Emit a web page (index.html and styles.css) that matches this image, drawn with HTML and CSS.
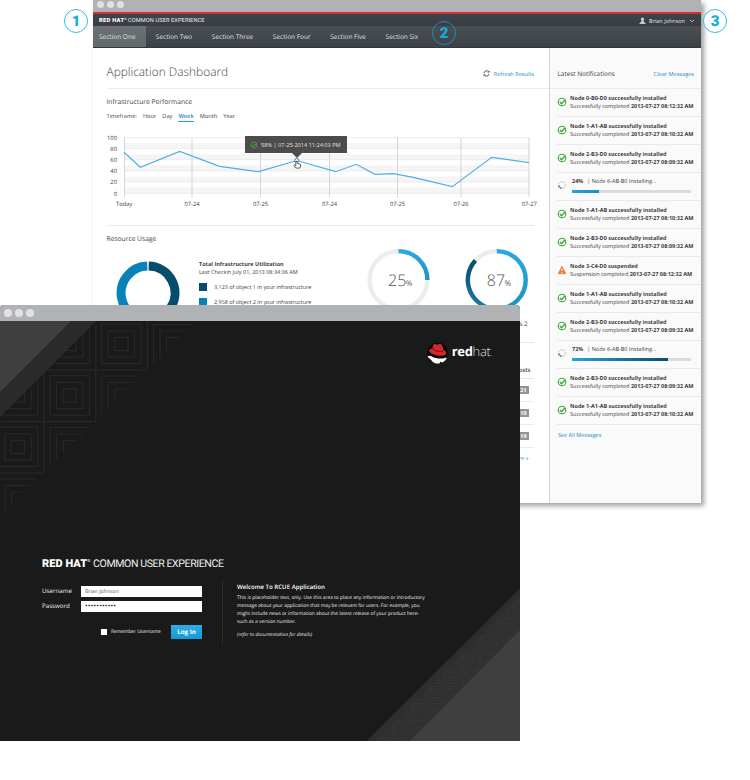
FILE: index.html
```html
<!DOCTYPE html>
<html lang="en">
<head>
<meta charset="utf-8">
<title>Red Hat Common User Experience</title>
<link rel="stylesheet" href="styles.css">
</head>
<body>
<svg class="defs" width="0" height="0" aria-hidden="true">
  <defs>
    <symbol id="ok" viewBox="0 0 10 10"><circle cx="5" cy="5" r="3.8" fill="none" stroke="#3fa535" stroke-width="1.1"/><path d="M2.9 5l1.6 1.7L8.2 2.8" fill="none" stroke="#3fa535" stroke-width="1.3"/></symbol>
    <symbol id="warn" viewBox="0 0 10 10"><path d="M5 1.2L8.9 8.7H1.1z" fill="#ec7a2c" stroke="#ec7a2c" stroke-width=".6" stroke-linejoin="round"/><path d="M5 3.6v2.6M5 7v1" stroke="#fff" stroke-width="1"/></symbol>
    <symbol id="spin" viewBox="0 0 10 10"><circle cx="5" cy="5" r="3.4" fill="none" stroke="#c9c9c9" stroke-width="1.1" stroke-dasharray="1.5 .7"/><path d="M1.7 5.6A3.4 3.4 0 0 0 5 8.4" fill="none" stroke="#555" stroke-width="1.3" stroke-dasharray="1.6 .6"/></symbol>
    <g id="corner" fill="none" stroke="#272727" stroke-width="1.2"><path d="M6 44.500V6H44.500M12.500 38.500V12.500H38.500M19 32V19H32"/></g>
    <g id="tile" fill="none" stroke="#272727" stroke-width="1.2"><path d="M5.700 5.700h39.500v39.500h-39.500zM12.300 12.300h26.400v26.400h-26.400zM18.800 18.800h13.300v13.300h-13.300zM0 51.600H51.600V0"/></g>
  </defs>
</svg>
<div class="desktop">
  <section class="window dashboard">
    <div class="titlebar"><i></i><i></i><i></i></div>
    <header class="topbar">
      <div class="product"><b>RED HAT</b><sup>®</sup> <span>COMMON USER EXPERIENCE</span></div>
      <div class="user">
        <svg width="7" height="8" viewBox="0 0 7 8"><path d="M3.500.4c1.200 0 1.700.8 1.600 1.900-.1.900-.5 1.400-.6 1.900.2.800 2 .8 2.200 2.800H.3c.2-2 2-2 2.200-2.800-.1-.5-.5-1-.6-1.900C1.800 1.200 2.300.4 3.500.4z" fill="#c6c8ca"/></svg>
        <span>Brian Johnson</span>
        <svg width="6" height="4" viewBox="0 0 6 4"><path d="M1 .9l2 2 2-2" fill="none" stroke="#c6c8ca" stroke-width=".9"/></svg>
      </div>
    </header>
    <nav class="nav">
      <a class="active">Section One</a><a>Section Two</a><a>Section Three</a><a>Section Four</a><a>Section Five</a><a>Section Six</a>
    </nav>
    <div class="body">
      <main class="main">
        <div class="pagehead">
          <h1>Application Dashboard</h1>
          <div class="refresh">
            <svg width="7" height="7" viewBox="0 0 7 7"><path d="M1 3a2.600 2.600 0 0 1 4.600-1.200M6 4a2.600 2.600 0 0 1-4.600 1.200" fill="none" stroke="#444" stroke-width=".9"/><path d="M6.500.4v2.200H4.300zM.5 6.600V4.400h2.200z" fill="#444"/></svg>
            <a>Refresh Results</a>
          </div>
        </div>
        <section class="performance">
          <h2>Infrastructure Performance</h2>
          <div class="timeframe"><span>Timeframe:</span><a>Hour</a><a>Day</a><a class="current">Week</a><a>Month</a><a>Year</a></div>
          <svg class="chart" width="436" height="80" viewBox="107 130 436 80">
            <g fill="#f5f5f5"><path d="M124 143h405v5.600H124zM124 154.200h405v5.600H124zM124 165.300h405v5.600H124zM124 176.500h405v5.500H124zM124 187.600h405v5.600H124z"/></g>
            <path d="M124 137.500H529M124 148.600H529M124 159.700H529M124 170.900H529M124 182H529M124 193.300H529" stroke="#e8e8ea" stroke-width=".8"/>
            <path d="M124.500 137.500V197M192 137.500V197M260.500 137.500V197M329.500 137.500V197M397.500 137.500V197M461 137.500V197M529 137.500V197" stroke="#d4d5d8"/>
            <polyline points="124,152.300 140.300,167.300 179.700,151.500 219.700,166.300 258.700,171.700 296.700,160.500 335.700,171.700 356.300,164.300 375,174.300 393.300,173.700 413.300,177.300 452.300,186.700 491.700,157.300 529,162.700" fill="none" stroke="#4fb0e4" stroke-width="1.200"/>
            <g class="ylabels"><text x="117" y="140">100</text><text x="117" y="151">80</text><text x="117" y="162">60</text><text x="117" y="173.300">40</text><text x="117" y="184.400">20</text><text x="117" y="195.500">0</text></g>
            <g class="xlabels"><text x="124.300" y="206">Today</text><text x="192" y="206">07-24</text><text x="260.500" y="206">07-25</text><text x="329.500" y="206">07-24</text><text x="397.500" y="206">07-25</text><text x="461" y="206">07-26</text><text x="529.300" y="206">07-27</text></g>
            <circle cx="296.700" cy="160.500" r="2" fill="#fff" stroke="#1d7fb5"/>
            <path d="M295.700 168l-1.900-2.600.9-.7 1.200 1v-4.200l1.100-.4.500 2.200 2.900.9.200 2-.8 1.900z" fill="#fff" stroke="#333" stroke-width=".8"/>
          </svg>
          <div class="tooltip"><svg width="8" height="8"><use href="#ok"/></svg><span>58% | 07-25-2014 11:24:03 PM</span></div>
        </section>
        <section class="usage">
          <h2>Resource Usage</h2>
          <div class="usagerow">
            <svg class="donut" width="64" height="64" viewBox="-32 -32 64 64"><g fill="none" stroke-width="9"><path d="M.7-27A27 27 0 0 1 22.800 14.500" stroke="#064c6b"/><path d="M21.800 15.900A27 27 0 0 1 9.500 25.300" stroke="#3ab0e2"/><path d="M8 25.800A27 27 0 1 1-.7-27" stroke="#0a82b8"/></g></svg>
            <div class="legend">
              <h3>Total Infrastructure Utilization</h3>
              <p>Last Checkin July 01, 2013 08:34:36 AM</p>
              <div class="key"><i class="k1"></i>3,123 of object 1 in your infrastructure</div>
              <div class="key"><i class="k2"></i>2,958 of object 2 in your infrastructure</div>
            </div>
            <svg class="gauges" width="162" height="64" viewBox="366 248 162 64">
              <defs>
                <linearGradient id="g1" x1="0" y1="0" x2="0" y2="1"><stop offset="0" stop-color="#27aae1"/><stop offset="1" stop-color="#2291c4"/></linearGradient>
                <linearGradient id="g2" x1="0" y1="0" x2="0" y2="1"><stop offset="0" stop-color="#0a4c6a"/><stop offset="1" stop-color="#1c7baa"/></linearGradient>
              </defs>
              <g fill="none" stroke-width="4.400"><circle cx="398.500" cy="280" r="28.900" stroke="#ececed"/><path d="M398.500 251.100a28.900 28.900 0 0 1 28.900 28.900" stroke="url(#g1)"/>
              <circle cx="496.800" cy="280" r="28.900" stroke="#ececed"/><path d="M496.800 251.100a28.900 28.900 0 0 1 0 57.800" stroke="url(#g1)"/><path d="M496.800 308.900a28.900 28.900 0 0 1-21.400-48.400" stroke="url(#g2)"/></g>
              <g class="gaugetext"><text x="388" y="286">25</text><text class="pct" x="405.700" y="286">%</text><text x="486.800" y="286">87</text><text class="pct" x="504.500" y="286">%</text></g>
            </svg>
          </div>
          <div class="objects">s 2</div>
        </section>
        <section class="posts">
          <div class="posthead">Posts</div>
          <div class="post"><b>21</b></div>
          <div class="post"><b>10</b></div>
          <div class="post"><b>19</b></div>
          <a class="more">More »</a>
        </section>
      </main>
      <aside class="side">
        <div class="sidehead"><h2>Latest Notifications</h2><a>Clear Messages</a></div>
        <div class="note"><svg><use href="#ok"/></svg><p><b>Node 0-B0-D0 successfully installed</b><br>Successfully completed <b>2013-07-27 08:12:32 AM</b></p></div>
        <div class="note"><svg><use href="#ok"/></svg><p><b>Node 1-A1-AB successfully installed</b><br>Successfully completed <b>2013-07-27 08:10:32 AM</b></p></div>
        <div class="note"><svg><use href="#ok"/></svg><p><b>Node 2-B3-D0 successfully installed</b><br>Successfully completed <b>2013-07-27 08:09:32 AM</b></p></div>
        <div class="note busy"><svg><use href="#spin"/></svg><div><p><b>24%</b><span>| Node 6-AB-B0 Installing...</span></p><div class="bar"><i class="light" style="width:22.400%"></i></div></div></div>
        <div class="note"><svg><use href="#ok"/></svg><p><b>Node 1-A1-AB successfully installed</b><br>Successfully completed <b>2013-07-27 08:10:32 AM</b></p></div>
        <div class="note"><svg><use href="#ok"/></svg><p><b>Node 2-B3-D0 successfully installed</b><br>Successfully completed <b>2013-07-27 08:09:32 AM</b></p></div>
        <div class="note"><svg><use href="#warn"/></svg><p><b>Node 3-C4-D0 suspended</b><br>Suspension completed <b>2013-07-27 08:12:32 AM</b></p></div>
        <div class="note"><svg><use href="#ok"/></svg><p><b>Node 1-A1-AB successfully installed</b><br>Successfully completed <b>2013-07-27 08:10:32 AM</b></p></div>
        <div class="note"><svg><use href="#ok"/></svg><p><b>Node 2-B3-D0 successfully installed</b><br>Successfully completed <b>2013-07-27 08:09:32 AM</b></p></div>
        <div class="note busy"><svg><use href="#spin"/></svg><div><p><b>72%</b><span>| Node 6-AB-B0 Installing...</span></p><div class="bar"><i style="width:80.500%"></i></div></div></div>
        <div class="note"><svg><use href="#ok"/></svg><p><b>Node 2-B3-D0 successfully installed</b><br>Successfully completed <b>2013-07-27 08:09:32 AM</b></p></div>
        <div class="note"><svg><use href="#ok"/></svg><p><b>Node 1-A1-AB successfully installed</b><br>Successfully completed <b>2013-07-27 08:10:32 AM</b></p></div>
        <a class="seeall">See All Messages</a>
      </aside>
    </div>
  </section>

  <section class="window login">
    <div class="titlebar"><i></i><i></i><i></i></div>
    <div class="screen">
      <svg class="art" width="520" height="420" viewBox="0 321 520 420">
        <defs><pattern id="weave" x="445" y="652" width="17.200" height="17" patternUnits="userSpaceOnUse"><rect width="17.200" height="17" fill="#353535"/><g transform="scale(.333)" fill="none" stroke="#292929" stroke-width="2.600"><path d="M5.700 5.700h39.500v39.500h-39.500zM12.300 12.300h26.400v26.400h-26.400zM18.800 18.800h13.300v13.300h-13.300zM0 51H51.600V0"/></g></pattern></defs>
        <use href="#tile" x="44.200" y="318.500"/><use href="#tile" x="95.800" y="318.500"/><use href="#tile" x="-7.500" y="370"/><use href="#tile" x="44.200" y="370"/><use href="#tile" x="-7.500" y="421.500"/>
        <use href="#corner" x="147.500" y="318.500"/><use href="#corner" x="95.800" y="370"/><use href="#corner" x="44.200" y="421.500"/><use href="#corner" x="-7.500" y="473"/>
        <path d="M0 321H96L0 417z" fill="#2b2b2b"/><path d="M0 321H71L0 392z" fill="#3f3f3f"/>
        <path d="M520 588V741H366.500z" fill="#2d2d2d"/><path d="M520 596V741H375z" fill="url(#weave)"/><path d="M520 630V741H410z" fill="#3f3f3f"/>
      </svg>
      <div class="brand">
        <svg width="21" height="22" viewBox="0 0 21 22"><circle cx="10.500" cy="11" r="10.300" fill="#000"/><path d="M.6 14.200c1.500-.9 3.300-.7 4.300.3 3.500 2 8.300 2.500 12.300 1.700.8-.5 2.300-.5 2.600-.1-.9 2.300-2.700 3.600-4.700 4.500l-1.800-.8-.8 1.600c-3 .5-5.500-.3-7.500-2.200-.6-1.400-2-2.600-3.400-3.300-.5-.6-.9-1.200-1-1.700z" fill="#fff"/><path d="M5.400 6.800c.3-2 .6-4.300 1.700-4.600 1.200-.4 2 .9 3.200.6 1-.2 2.300-1.100 3.600-.5 1.500.7 2.200 3.300 2.600 5.600 1.900.6 3.200 2 2.700 3.500-.7 2.100-4.500 2.700-8.500 2-4.300-.6-8.200-2.500-8.600-4.700-.2-1.300 1.500-1.900 3.300-1.900z" fill="#d8262c"/><path d="M5.300 6.600c2.400 2.300 7.500 3.600 10.800 2.500" fill="none" stroke="#5c1013" stroke-width=".9"/><path d="M11.200 14.200c1 .8 2.300.6 3.200.1l-.3 1.200c-1 .5-2.200.2-2.900-1.300z" fill="#000"/></svg>
        <span><b>red</b>hat<small>.</small></span>
      </div>
      <div class="content">
        <h2 class="product big"><b>RED HAT</b><sup>®</sup> <span>COMMON USER EXPERIENCE</span></h2>
        <div class="cols">
          <div class="form">
            <div class="field"><span>Username</span><div class="input">Brian Johnson</div></div>
            <div class="field"><span>Password</span><div class="input dots">•••••••••••</div></div>
            <div class="actions"><i class="check"></i><span>Remember Username</span><div class="btn">Log In</div></div>
          </div>
          <div class="welcome">
            <h3>Welcome To RCUE Application</h3>
            <p>This is placeholder text, only. Use this area to place any information or introductory<br>message about your application that may be relevant for users. For example, you<br>might include news or information about the latest release of your product here-<br>such as a version number.</p>
            <p class="ref">(refer to documentation for details)</p>
          </div>
        </div>
      </div>
    </div>
  </section>

  <div class="pin p1">1</div>
  <div class="pin p2">2</div>
  <div class="pin p3">3</div>
</div>
</body>
</html>
```
FILE: styles.css
```css
* { box-sizing: border-box; }
body { margin: 0; background: #fff; font-family: "Open Sans", sans-serif; font-size: 5.6px; line-height: 8px; color: #3d3d3f; text-rendering: geometricPrecision; }
h1, h2, h3, p { margin: 0; font-weight: 400; }
a { color: #108acb; }
svg { display: block; flex: none; }
.defs { position: absolute; }
.desktop { position: relative; width: 750px; height: 780px; overflow: hidden; white-space: nowrap; }
.window { position: absolute; display: flex; flex-direction: column; }
.titlebar { display: flex; align-items: center; background: #b1b2b6; flex: none; }
.titlebar i { border-radius: 50%; background: #e0e1e3; }

/* dashboard window */
.dashboard { left: 93px; top: 0; width: 608px; height: 503px; background: #fff; box-shadow: 3px 3px 5px rgba(0,0,0,.38); }
.dashboard .titlebar { height: 12px; padding: 0 4px 3px; gap: 3px; }
.dashboard .titlebar i { width: 7px; height: 7px; }
.topbar { height: 14px; flex: none; border-top: 2px solid #d2322d; background: linear-gradient(#3f444c, #393e45); display: flex; justify-content: space-between; align-items: center; padding: 1px 6px 0; color: #e0e1e3; }
.product { font-family: Roboto, sans-serif; font-size: 5.7px; line-height: 8px; color: #fff; }
.product b { font-weight: 900; letter-spacing: .3px; }
.product sup { font-size: 3px; line-height: 0; vertical-align: 2px; }
.product span { color: #e8e8e8; letter-spacing: .07px; }
.user { display: flex; align-items: center; font-size: 5.5px; gap: 3px; }
.user span { margin-right: 1px; }
.nav { height: 22px; flex: none; display: flex; background: linear-gradient(#4b5054, #3c4147); border-bottom: 1px solid #33373c; }
.nav a { color: #dfe0e2; font-size: 6.5px; line-height: 21px; padding: 0 9.800px; }
.nav .active { background: linear-gradient(#6c7174, #63686b); padding: 0 10.500px 0 6px; }
.body { flex: 1; display: flex; min-height: 0; }
.main { width: 456px; padding-left: 13.500px; }
.pagehead { height: 41px; border-bottom: 1px solid #e9ebee; display: flex; justify-content: space-between; align-items: center; padding: 8px 15px 0 0; }
h1 { font-size: 11.9px; line-height: 16px; font-weight: 300; }
.refresh { display: flex; align-items: center; gap: 4px; padding-top: 3px; }
.main h2 { font-size: 6.7px; line-height: 10px; }
.performance { position: relative; height: 137px; width: 427px; padding-top: 8px; border-bottom: 1px solid #e9e9ea; }
.timeframe { display: flex; gap: 6px; line-height: 10px; margin-top: 4px; font-size: 5.7px; }
.timeframe a { color: #3d3d3f; }
.timeframe .current { color: #108acb; font-weight: 600; border-bottom: 1px solid #2a9bd3; height: 11px; }
.chart { margin: 7.500px 0 0 .5px; }
.chart text { font-size: 5.8px; fill: #3d3d3f; }
.ylabels { text-anchor: end; }
.xlabels { text-anchor: middle; }
.tooltip { position: absolute; left: 138.500px; top: 47px; width: 102px; height: 17px; background: #4d4b4c; color: #e2e2e2; display: flex; align-items: center; gap: 3px; padding-left: 5px; }
.tooltip::after { content: ""; position: absolute; left: 47px; top: 17px; border: 5px solid transparent; border-top-color: #4d4b4c; border-bottom: 0; }
.usage { height: 117px; width: 427px; padding-top: 8px; border-bottom: 1px solid #e9e9ea; }
.usagerow { display: flex; align-items: flex-start; height: 76px; }
.donut { margin: 17px 0 0 9px; }
.legend { margin: 15.500px 0 0 19.500px; width: 167px; }
.legend h3 { font-size: 5.5px; font-weight: 700; line-height: 8px; }
.legend p { font-size: 5.5px; }
.key { display: flex; align-items: center; gap: 7px; height: 8px; margin-top: 7px; font-size: 5.45px; }
.key i { width: 8px; height: 8px; }
.k1 { background: #064c6b; }
.k2 { background: #0a82b8; }
.gauges { margin-top: 4px; margin-left: -.5px; }
.gaugetext { font-size: 16px; font-weight: 300; fill: #545558; }
.gaugetext .pct { font-size: 8px; font-weight: 400; }
.objects { text-align: right; padding-right: 6px; font-size: 6.2px; }
.posts { width: 427px; display: flex; flex-direction: column; align-items: flex-end; padding-top: 21px; }
.posthead { width: 100%; height: 15px; text-align: right; font-weight: 600; padding: 2px 3px 0 0; border-bottom: 1px solid #e5e5e5; font-size: 6px; }
.post { width: 100%; height: 23px; display: flex; align-items: center; justify-content: flex-end; padding-right: 5px; border-bottom: 1px solid #ececec; }
.post b { background: #949496; color: #fff; width: 13px; text-align: right; padding-right: 2px; font-size: 5.4px; }
.more { margin: 6px 5px 0 0; }

/* notifications */
.side { width: 152px; background: #fafafa; border-left: 1px solid #d3d4d6; padding-left: 7px; }
.sidehead { height: 40.500px; margin-left: -7px; padding: 12.500px 7px 0 7.500px; border-bottom: 1px solid #e9ebee; display: flex; justify-content: space-between; align-items: center; }
.sidehead h2 { font-size: 6.400px; }
.note { height: 28px; border-bottom: 1px solid #e9e9ea; display: flex; padding-top: 5.500px; font-size: 5.5px; }
.note svg { width: 10px; height: 10px; margin: 2.500px 3px 0 0; }
.note.busy { padding-top: 4.500px; }
.busy svg { margin-top: 3px; }
.busy p { height: 12.500px; margin-left: 2px; }
.busy span { margin-left: 4px; }
.bar { width: 119px; height: 3px; background: #d9dadb; margin-left: 2px; }
.bar i { display: block; height: 100%; background: linear-gradient(90deg, #27a3da, #0a4c6a); }
.bar .light { background: linear-gradient(90deg, #27a3da, #1c8fc4); }
.seeall { display: block; padding: 6.500px 0 0 1px; font-size: 5.5px; }

/* login window */
.login { left: 0; top: 305px; width: 520px; height: 436px; background: #1a1a1a; border-radius: 4px 4px 0 0; overflow: hidden; }
.login .titlebar { height: 16px; padding-left: 4px; gap: 3.500px; }
.login .titlebar i { width: 7.500px; height: 7.500px; }
.screen { position: relative; flex: 1; color: #ececec; }
.art { position: absolute; left: 0; top: 0; }
.brand { position: relative; display: flex; align-items: center; justify-content: flex-end; gap: 4px; padding: 20px 28px 0 0; }
.brand span { font-size: 13px; line-height: 20px; color: #ddd; font-weight: 300; letter-spacing: -.3px; }
.brand b { font-weight: 700; color: #fff; }
.brand small { font-size: 7px; }
.content { position: relative; padding: 191px 0 0 42px; }
.big { font-size: 11px; line-height: 16px; }
.big b { letter-spacing: .05px; }
.big span { font-size: 10.6px; font-weight: 400; letter-spacing: -.42px; color: #eee; }
.big sup { font-size: 4px; vertical-align: 5px; }
.cols { display: flex; margin-top: 8px; }
.form { width: 181px; height: 65px; border-right: 1px solid #2c2c2c; padding-top: 6px; }
.field { display: flex; height: 15px; font-size: 6.200px; }
.field span { width: 39px; line-height: 9px; }
.input { width: 121px; height: 11px; background: #fff; color: #555; font-size: 5.2px; line-height: 11px; padding-left: 4px; }
.dots { color: #111; font-size: 7px; letter-spacing: .2px; }
.actions { display: flex; align-items: center; width: 160px; margin-top: 9px; font-size: 4.85px; }
.check { width: 6px; height: 6px; background: #fff; margin: 0 4px 0 59px; }
.btn { margin-left: auto; width: 31px; height: 13.500px; background: linear-gradient(#2bade4, #149ad4); color: #fff; font-weight: 700; font-size: 6.200px; line-height: 13px; text-align: center; }
.welcome { padding: 2px 0 0 14px; font-size: 4.85px; }
.welcome h3 { font-size: 6.1px; font-weight: 600; color: #fff; margin-bottom: 3px; line-height: 9px; }
.ref { font-style: italic; margin-top: 4.500px; }

/* numbered pins */
.pin { position: absolute; width: 24px; height: 24px; border: 1px solid #35bbe2; border-radius: 50%; color: #12aeda; font: 900 15px/22px Roboto, sans-serif; text-align: center; }
.p1 { left: 64px; top: 9px; }
.p2 { left: 432px; top: 21px; border-color: #1b8fb0; }
.p3 { left: 703px; top: 9px; background: #fff; }
```
